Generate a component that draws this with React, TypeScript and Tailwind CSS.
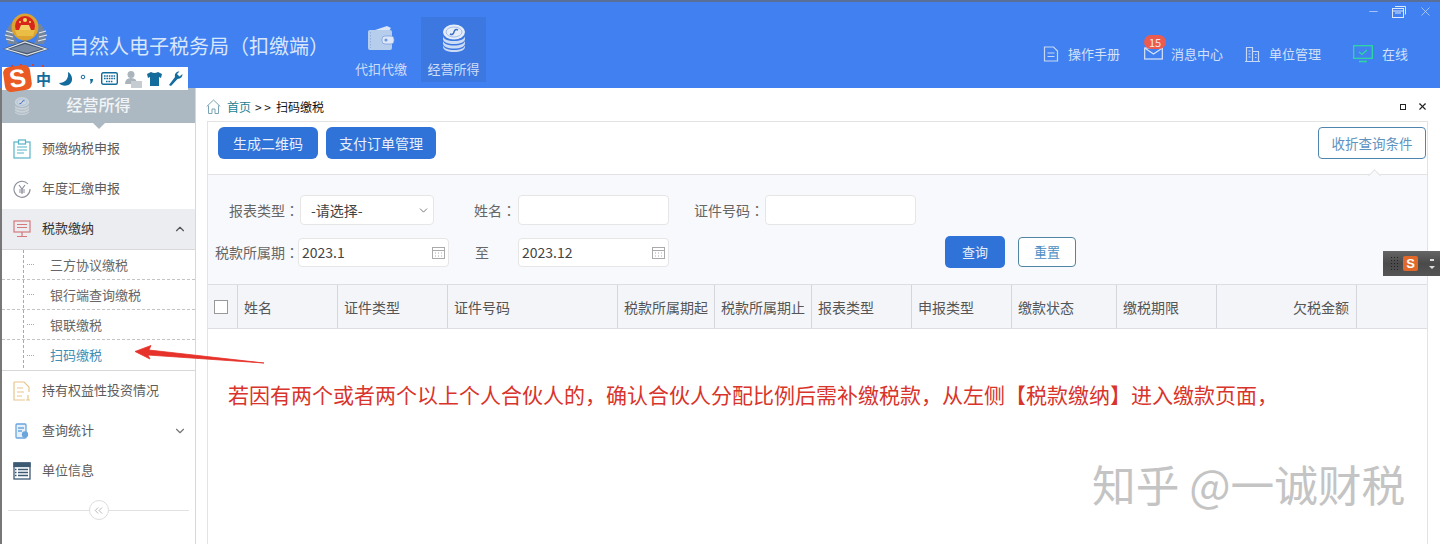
import React from "react";
import { ChevronUp, ChevronDown, ChevronsLeft, Minus, X } from "lucide-react";

function Emblem() {
  return (
    <svg width="54" height="66" viewBox="0 0 54 66">
      <path d="M3 47 L25 38 L49 47 L27 55 Z" fill="#46566e" />
      <path d="M6 47 L25 40 L46 47 L27 53 Z" fill="none" stroke="#dfe6ee" strokeWidth="1.200" />
      <path d="M10 47 L25 42 L42 47 L27 51 Z" fill="#7a8aa0" />
      <path d="M10 22 Q3 32 8 42 L18 42 Q11 32 14 22Z" fill="#74859c" />
      <path d="M41 22 Q48 32 44 42 L34 42 Q40 32 38 22Z" fill="#74859c" />
      <path d="M6 29l7 2M5 33l8 2M6 37l8 2M46 29l-7 2M47 33l-8 2M46 37l-8 2" stroke="#e3e9f0" strokeWidth="1.200" />
      <circle cx="25" cy="25" r="13.500" fill="#dca331" />
      <circle cx="25" cy="24" r="10" fill="#d8261c" />
      <path d="M15 28 H35 L33 34 H17 Z" fill="#eabd45" />
      <path d="M19 28 L21 23 H29 L31 28Z" fill="#f2cf63" />
      <circle cx="25" cy="18" r="2" fill="#f7da62" />
      <circle cx="20" cy="20" r="1" fill="#f7da62" />
      <circle cx="30" cy="20" r="1" fill="#f7da62" />
      <path d="M11 64h2M20 63h2M32 63h2M42 64h2" stroke="#c9453a" strokeWidth="2" />
    </svg>
  );
}

function Wallet() {
  return (
    <svg width="28" height="26" viewBox="0 0 28 26">
      <path d="M5 6 L20 1 L24 3 L22 6Z" fill="#dbe6f6" />
      <rect x="1" y="5" width="24" height="20" rx="2" fill="#b7cdec" />
      <path d="M3.500 7v16" stroke="#8fb0e2" strokeWidth="1" strokeDasharray="1.500 1.500" />
      <rect x="15" y="11" width="12" height="8" rx="3" fill="#dde7f7" stroke="#7ba0dc" strokeWidth=".8" />
      <circle cx="19" cy="15" r="1.600" fill="#6f97d8" />
    </svg>
  );
}

function Coins({ size = 28, color = "#e6edf8" }: { size?: number; color?: string }) {
  return (
    <svg width={size} height={size} viewBox="0 0 28 28">
      <path d="M3 12 v3 c0 3 5 5 11 5 s11-2 11-5 v-3 c0 3-5 5-11 5 S3 15 3 12Z" fill={color} opacity=".85" />
      <path d="M3 16.500 v3 c0 3 5 5 11 5 s11-2 11-5 v-3 c0 3-5 5-11 5 S3 19.500 3 16.500Z" fill={color} opacity=".85" />
      <path d="M3 21 v2 c0 3 5 5 11 5 s11-2 11-5 v-2 c0 3-5 5-11 5 S3 24 3 21Z" fill={color} opacity=".85" />
      <ellipse cx="14" cy="8" rx="11" ry="7.500" fill={color} />
      <ellipse cx="14" cy="8" rx="8" ry="5" fill="none" stroke="#8eaee4" strokeWidth=".8" />
      <path d="M10 10 q3 1.500 4-2 t4-2" fill="none" stroke="#3f6fc4" strokeWidth="1.500" />
    </svg>
  );
}

function HeaderLink({ icon, label, cls }: { icon: React.ReactNode; label: string; cls: string }) {
  return (
    <div className={`relative flex items-center gap-2 ${cls}`}>
      {icon}
      <span className="text-[13px] text-[#d3e1f9]">{label}</span>
    </div>
  );
}

function NavIcon({ kind }: { kind: string }) {
  switch (kind) {
    case "clip":
      return (
        <svg width="18" height="20" viewBox="0 0 18 20" fill="none" stroke="#55b4c7" strokeWidth="1.200">
          <rect x="1" y="3" width="16" height="16" />
          <rect x="5.500" y="1" width="7" height="4" fill="#fff" />
          <path d="M4 8h10M4 11h10M4 14h7" />
        </svg>
      );
    case "yen":
      return (
        <svg width="18" height="18" viewBox="0 0 18 18" fill="none" stroke="#8b8f99" strokeWidth="1.100">
          <path d="M15 4 A8 8 0 1 0 17 9" />
          <path d="M6 5l3 4 3-4M9 9v5M6 10h6M6 12h6" />
        </svg>
      );
    case "screen":
      return (
        <svg width="18" height="18" viewBox="0 0 18 18" fill="none" stroke="#d7787a" strokeWidth="1.200">
          <rect x="1" y="1" width="16" height="11" />
          <path d="M4 4.500h10M4 7.500h10M9 12v4M4 16.500h10" />
        </svg>
      );
    case "doc":
      return (
        <svg width="18" height="20" viewBox="0 0 18 20" fill="none" stroke="#e7c78a" strokeWidth="1.200">
          <path d="M1 1h10l5 5v5M1 1v18h11" />
          <path d="M4 7h6M4 11h7M4 15h5M15 14v5M13 19h4" />
        </svg>
      );
    case "query":
      return (
        <svg width="14" height="16" viewBox="0 0 14 16" fill="none" stroke="#6aa5dd" strokeWidth="1.300">
          <rect x="1" y="1" width="10" height="14" rx="1" fill="#e6f0fa" />
          <path d="M3 5h6M3 8h4" />
          <circle cx="10" cy="11.500" r="2.500" fill="#6aa5dd" />
        </svg>
      );
    default:
      return (
        <svg width="18" height="18" viewBox="0 0 18 18" fill="none" stroke="#3d5a73" strokeWidth="1.300">
          <rect x="1" y="1" width="16" height="16" />
          <rect x="1" y="1" width="16" height="3.500" fill="#3d5a73" />
          <path d="M5 7.500h10M5 10.500h10M5 13.500h10M2 7.500h1.500M2 10.500h1.500M2 13.500h1.500" />
        </svg>
      );
  }
}

function NavItem({ kind, label, active, chevron }: { kind: string; label: string; active?: boolean; chevron?: "up" | "down" }) {
  return (
    <div className={`flex h-10 items-center ${active ? "bg-[#ebedf1] text-[#333]" : "text-[#5c5c5c]"}`}>
      <div className="flex w-[40px] justify-center">
        <NavIcon kind={kind} />
      </div>
      <span className="pb-[2px] text-[13px]">{label}</span>
      {chevron === "up" && <ChevronUp className="ml-auto mr-[8px] text-[#555]" size={14} />}
      {chevron === "down" && <ChevronDown className="ml-auto mr-[8px] text-[#777]" size={14} />}
    </div>
  );
}

function SubItem({ label, active, last }: { label: string; active?: boolean; last?: boolean }) {
  return (
    <div className={`flex h-[30px] items-center ${last ? "" : "border-b border-dashed border-[#c4c4c4]"}`}>
      <span className="ml-[25px] w-[7px] border-t border-dotted border-[#aaa]" />
      <span className={`ml-[16px] text-[13px] ${active ? "text-[#3e8db5]" : "text-[#666]"}`}>{label}</span>
    </div>
  );
}

function Calendar() {
  return (
    <svg className="ml-auto mr-[3px]" width="13" height="13" viewBox="0 0 13 13" fill="none" stroke="#aaa" strokeWidth="1">
      <rect x=".5" y="1.500" width="12" height="11" />
      <path d="M.5 4.500h12M3 7h1M6 7h1M9 7h1M3 10h1M6 10h1M9 10h1" />
    </svg>
  );
}

function Label({ text, cls }: { text: string; cls: string }) {
  return (
    <span className={`whitespace-nowrap ${cls}`}>
      {text}
      <span className="font-['Noto_Sans_CJK_TC',sans-serif]">：</span>
    </span>
  );
}

const columns: [string, string][] = [
  ["姓名", "w-[100px]"],
  ["证件类型", "w-[110px]"],
  ["证件号码", "w-[170px]"],
  ["税款所属期起", "w-[97px]"],
  ["税款所属期止", "w-[97px]"],
  ["报表类型", "w-[100px]"],
  ["申报类型", "w-[100px]"],
  ["缴款状态", "w-[105px]"],
  ["缴税期限", "w-[100px]"],
];

export default function App() {
  return (
    <div className="relative flex h-[544px] w-[1440px] flex-col overflow-hidden bg-white font-['Noto_Sans_CJK_SC','Noto_Sans',sans-serif]">
      {/* header */}
      <header className="relative flex h-[88px] shrink-0 items-stretch border-t-2 border-[#5a6f98] bg-[#4080f0]">
        <div className="w-[69px] shrink-0">
          <Emblem />
        </div>
        <div className="w-[282px] pt-[31px] text-[20px] leading-[26px] text-[#d9e6fb]">自然人电子税务局（扣缴端）</div>
        <div className="mb-[4px] flex h-[66px] w-[60px] flex-col items-center self-end pt-[7px]">
          <Wallet />
          <span className="mt-[10px] text-[13px] leading-[16px] text-[#cfdef8]">代扣代缴</span>
        </div>
        <div className="ml-[10px] mt-[15px] flex h-[65px] w-[65px] flex-col items-center bg-[#3d78e0] pt-[7px]">
          <Coins />
          <span className="mt-[9px] text-[13px] leading-[16px] text-[#cfdef8]">经营所得</span>
        </div>
        <div className="ml-auto flex items-start pt-[42px]">
          <HeaderLink
            cls="w-[100px]"
            label="操作手册"
            icon={
              <svg width="17" height="16" viewBox="0 0 17 16" fill="none" stroke="#c7d8f6" strokeWidth="1.200">
                <path d="M1.500 1h9l4 4v10h-13Z" />
                <path d="M4.500 7h7M4.500 10.500h7" />
              </svg>
            }
          />
          <HeaderLink
            cls="w-[101px]"
            label="消息中心"
            icon={
              <>
                <svg className="ml-[1px]" width="19" height="13" viewBox="0 0 20 13" fill="none" stroke="#d4e1f8" strokeWidth="1.300">
                  <rect x=".7" y=".7" width="18.600" height="11.600" />
                  <path d="M1 1l9 6 9-6" />
                </svg>
                <span className="absolute left-[1px] top-[-9px] flex h-[14px] w-[22px] items-center justify-center rounded-full bg-[#ec5b50] text-[11px] leading-none text-[#f6e6e4]">15</span>
              </>
            }
          />
          <HeaderLink
            cls="w-[109px]"
            label="单位管理"
            icon={
              <svg width="17" height="16" viewBox="0 0 17 16" fill="none" stroke="#c7d8f6" strokeWidth="1.200">
                <path d="M1 15.500h15M2.500 15V1.500h6V15M8.500 5.500h6V15M4.500 5h2M4.500 8h2M4.500 11h2M11 8.500h1.500M11 11.500h1.500" />
              </svg>
            }
          />
          <HeaderLink
            cls="w-[87px]"
            label="在线"
            icon={
              <svg className="mr-[1px]" width="20" height="18" viewBox="0 0 20 18" fill="none" stroke="#2fd8a0" strokeWidth="1.300">
                <rect x=".7" y=".7" width="18.600" height="12.600" />
                <path d="M6 7l3 2.500 5-4.500M6 16.500h8" />
              </svg>
            }
          />
        </div>
        <div className="absolute right-[7px] top-[2px] flex items-center gap-[12px] text-[#dde8fb]">
          <Minus size={13} strokeWidth={1.200} />
          <svg width="14" height="12" viewBox="0 0 14 12" fill="none" stroke="#dde8fb" strokeWidth="1">
            <rect x=".5" y="2.500" width="11" height="9" />
            <path d="M3 .5h10.500v8M.5 5h11M3 7h6" />
          </svg>
          <X size={15} strokeWidth={1} />
        </div>
      </header>

      <div className="flex min-h-0 flex-1">
        {/* sidebar */}
        <aside className="flex w-[196px] shrink-0 flex-col border-l-2 border-r border-l-[#777] border-r-[#d8d8d8] bg-white">
          <div className="relative flex h-[35px] shrink-0 items-center bg-[#adb9c2]">
            <span className="absolute left-[11px] top-[9px]"><Coins size={18} color="#ced6dc" /></span>
            <span className="w-full pb-[4px] text-center text-[16px] font-medium text-[#f1f4f6]">经营所得</span>
            <span className="absolute left-[91px] top-[35px] h-0 w-0 border-x-[6px] border-t-[6px] border-x-transparent border-t-[#adb9c2]" />
          </div>
          <div className="mt-[6px]">
            <NavItem kind="clip" label="预缴纳税申报" />
            <NavItem kind="yen" label="年度汇缴申报" />
            <NavItem kind="screen" label="税款缴纳" active chevron="up" />
            <div className="relative h-[122px] border-y border-[#d8d8d8]">
              <span className="absolute bottom-[2px] left-[21px] top-0 border-l border-dashed border-[#aaa]" />
              <SubItem label="三方协议缴税" />
              <SubItem label="银行端查询缴税" />
              <SubItem label="银联缴税" />
              <SubItem label="扫码缴税" active last />
            </div>
            <NavItem kind="doc" label="持有权益性投资情况" />
            <NavItem kind="query" label="查询统计" chevron="down" />
            <NavItem kind="table" label="单位信息" />
          </div>
          <div className="mx-[6px] mt-[9px] flex items-center">
            <span className="h-px flex-1 bg-[#e2e2e2]" />
            <span className="flex h-[20px] w-[20px] items-center justify-center rounded-full border border-[#ddd] text-[#999]">
              <ChevronsLeft size={13} strokeWidth={1.300} />
            </span>
            <span className="h-px flex-1 bg-[#e2e2e2]" />
          </div>
        </aside>

        {/* main */}
        <main className="flex min-w-0 flex-1 flex-col">
          <div className="flex h-[33px] shrink-0 items-center pl-[10px] pr-[12px] pt-[4px] text-[12px]">
            <svg width="15" height="15" viewBox="0 0 15 15" fill="none" stroke="#7aa3b5" strokeWidth="1">
              <path d="M.7 7.500 7.500 1l6.800 6.500M2.500 6.500v8h3.500v-4.500h3v4.500h3.500v-8" />
            </svg>
            <span className="ml-[6px] text-[#1d7f93]">首页</span>
            <span className="ml-[4px] text-[#222]">&gt; &gt;</span>
            <span className="ml-[5px] text-[#111]">扫码缴税</span>
            <span className="ml-auto h-[6px] w-[6px] border-[1.5px] border-[#222]" />
            <X className="ml-[11px] text-[#222]" size={11} strokeWidth={2.400} />
          </div>
          <section className="ml-[11px] mr-[12px] flex min-h-0 flex-1 flex-col border-x border-t border-[#e3e3e3]">
            <div className="relative flex h-[53px] shrink-0 items-start gap-[8px] border-b border-[#e3e3e3] pl-[10px] pt-[5px] text-[14px]">
              <button className="h-[32px] w-[100px] rounded-[6px] bg-[#2f72d8] text-[#e8effa]">生成二维码</button>
              <button className="h-[32px] w-[110px] rounded-[6px] bg-[#2f72d8] text-[#e8effa]">支付订单管理</button>
              <button className="ml-auto mr-[1px] h-[32px] w-[108px] rounded-[4px] border border-[#4f86b0] bg-white text-[13.5px] text-[#5e92bf]">收折查询条件</button>
              <span className="absolute bottom-[-1px] right-[48px] h-[9px] w-[9px] translate-y-[5px] rotate-45 border-l border-t border-[#e3e3e3] bg-[#f8f9fc]" />
            </div>
            <div className="h-[109px] shrink-0 bg-[#f8f9fc] pt-[20px] text-[14px] text-[#666]">
              <div className="flex h-[30px] items-center">
                <Label text="报表类型" cls="w-[92px] pl-[21px]" />
                <div className="flex h-[30px] w-[134px] items-center rounded-[4px] border border-[#e6e6e6] bg-white pl-[10px] pr-[3px] text-[#444]">
                  -请选择-
                  <ChevronDown className="ml-auto text-[#444]" size={13} strokeWidth={1.300} />
                </div>
                <Label text="姓名" cls="ml-[40px] w-[44px]" />
                <div className="h-[30px] w-[151px] rounded-[4px] border border-[#e6e6e6] bg-white" />
                <Label text="证件号码" cls="ml-[25px] w-[71px]" />
                <div className="h-[30px] w-[151px] rounded-[4px] border border-[#e6e6e6] bg-white" />
              </div>
              <div className="mt-[11px] flex h-[32px] items-center">
                <Label text="税款所属期" cls="w-[90px] pl-[7px]" />
                <div className="flex h-[29px] w-[151px] items-center rounded-[4px] border border-[#e6e6e6] bg-white pl-[3px] text-[#444]">
                  2023.1
                  <Calendar />
                </div>
                <span className="ml-[26px] w-[43px]">至</span>
                <div className="flex h-[29px] w-[151px] items-center rounded-[4px] border border-[#e6e6e6] bg-white pl-[3px] text-[#444]">
                  2023.12
                  <Calendar />
                </div>
                <button className="ml-[276px] h-[32px] w-[60px] rounded-[5px] bg-[#2f72d8] text-[13px] text-[#e8effa]">查询</button>
                <button className="ml-[13px] h-[30px] w-[58px] rounded-[4px] border border-[#4f86a0] bg-white text-[13px] text-[#4e8fc4]">重置</button>
              </div>
            </div>
            <div className="flex h-[45px] shrink-0 border-y border-[#dcdee3] bg-[#f4f5f9] text-[14px] text-[#555]">
              <div className="flex w-[30px] items-center justify-center border-r border-[#d4d6db] pr-[3px]">
                <span className="h-[14px] w-[14px] border border-[#999] bg-white" />
              </div>
              {columns.map(([name, w]) => (
                <div key={name} className={`flex items-center border-r border-[#d4d6db] pl-[6px] pt-[2px] ${w}`}>{name}</div>
              ))}
              <div className="flex w-[140px] items-center justify-end border-r border-[#d4d6db] pr-[7px] pt-[2px]">欠税金额</div>
            </div>
            <div className="relative flex-1">
              <p className="ml-[20px] mt-[51px] whitespace-nowrap text-[21px] leading-[28px] text-[#d9342b]">
                若因有两个或者两个以上个人合伙人的，确认合伙人分配比例后需补缴税款，从左侧【税款缴纳】进入缴款页面，
              </p>
              <p className="absolute left-[884px] top-[125px] whitespace-nowrap text-[43.7px] leading-[58px] text-[#c4c4c4]">
                知乎 @一诚财税
              </p>
            </div>
          </section>
        </main>
      </div>

      {/* Sogou IME bar */}
      <div className="absolute left-[2px] top-[67px] flex h-[23px] w-[186px] items-center bg-white pl-[34px] text-[#146c9c]">
        <span className="text-[15px] font-bold leading-none">中</span>
        <svg className="ml-[7px]" width="16" height="16" viewBox="0 0 16 16"><path d="M10 1 C11 8 7 12 1 12 C4 16 13 16 14 9 C14.500 5 12 2 10 1Z" fill="#146c9c" /></svg>
        <svg className="ml-[6px]" width="14" height="14" viewBox="0 0 14 14"><circle cx="3" cy="5" r="1.800" fill="none" stroke="#146c9c" /><path d="M10 7 h3 q0 4-3 5 q1-2 0-5" fill="#146c9c" /></svg>
        <svg className="ml-[7px]" width="17" height="13" viewBox="0 0 17 13"><rect x=".7" y=".7" width="15.600" height="11.600" rx="1.500" fill="none" stroke="#146c9c" strokeWidth="1.400" /><path d="M3 4h11M3 6.500h11M5 9.500h7" stroke="#146c9c" strokeWidth="1.600" strokeDasharray="1.600 .8" /></svg>
        <svg className="ml-[7px]" width="18" height="18" viewBox="0 0 18 18"><circle cx="6" cy="4.500" r="3.500" fill="#a9b4bc" /><path d="M0 14 q0-6 6-6 q6 0 6 6Z" fill="#a9b4bc" /><rect x="6" y="11" width="11" height="7" fill="#c5ccd2" /></svg>
        <svg className="ml-[4px]" width="15" height="14" viewBox="0 0 15 14"><path d="M0 2 L4 0 Q7.500 2 11 0 L15 2 L14 6 L12 5 V14 H3 V5 L1 6Z" fill="#146c9c" /></svg>
        <svg className="ml-[6px]" width="15" height="15" viewBox="0 0 15 15"><path d="M1 14 L7 6 Q6 2 10 .5 L11.500 .5 L9 3 L11.500 5.500 L14.500 3 Q14.500 7.500 9.500 8 L3 15Z" fill="#146c9c" /></svg>
      </div>
      <div className="absolute left-[4px] top-[66px] flex h-[25px] w-[27px] rotate-[-8deg] items-center justify-center rounded-[6px] bg-[#ea5a24] font-['Liberation_Sans',sans-serif] text-[25px] font-bold leading-none text-white">S</div>

      {/* Sogou floating widget */}
      <div className="absolute left-[1383px] top-[251px] flex h-[25px] w-[57px] items-center bg-gradient-to-b from-[#666] via-[#4a4a4a] to-[#555] pl-[7px]">
        <span className="h-[16px] w-[8px] bg-[radial-gradient(#222_1px,transparent_1px)] bg-[length:3px_3px]" />
        <span className="ml-[5px] flex h-[15px] w-[15px] items-center justify-center rounded-[2px] bg-[#e2682a] font-['Liberation_Sans',sans-serif] text-[13px] font-bold leading-none text-white">S</span>
        <span className="ml-[11px] flex flex-col items-center gap-[5px]">
          <span className="h-[2px] w-[4px] bg-[#ddd]" />
          <span className="h-0 w-0 border-x-[3px] border-t-[3px] border-x-transparent border-t-[#ddd]" />
        </span>
      </div>

      {/* red arrow annotation */}
      <svg className="absolute left-[130px] top-[342px]" width="140" height="26" viewBox="0 0 140 26">
        <path d="M5 9.500 L21 3.500 L19 8 L134 21 L18 13 L20 17Z" fill="#e6322a" stroke="#e6322a" strokeWidth=".8" strokeLinejoin="round" />
      </svg>
    </div>
  );
}
